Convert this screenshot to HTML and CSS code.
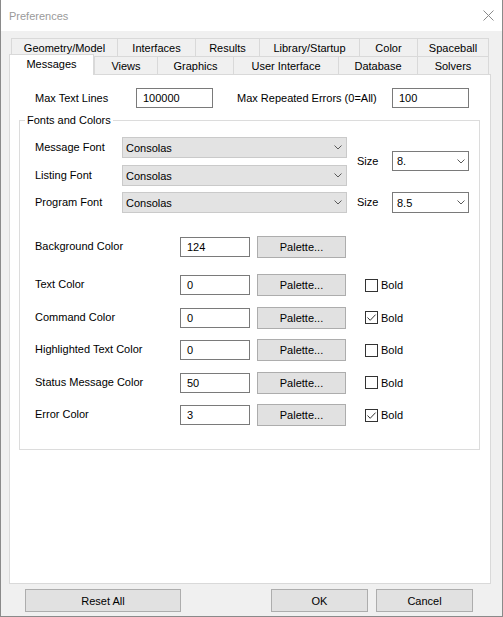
FILE: index.html
```html
<!DOCTYPE html>
<html>
<head>
<meta charset="utf-8">
<title>Preferences</title>
<link rel="stylesheet" href="styles.css">
</head>
<body>
<div class="window">
  <div class="titlebar">
    <span class="title">Preferences</span>
    <svg class="close" width="11" height="11" viewBox="0 0 11 11"><path d="M0.5 0.5 L10.5 10.5 M10.5 0.5 L0.5 10.5" stroke="#8a8a8a" stroke-width="1" fill="none"/></svg>
  </div>

  <div class="tabs">
    <div class="tabrow row1">
      <div class="tab t-geo">Geometry/Model</div>
      <div class="tab t-int">Interfaces</div>
      <div class="tab t-res">Results</div>
      <div class="tab t-lib">Library/Startup</div>
      <div class="tab t-col">Color</div>
      <div class="tab t-spa last">Spaceball</div>
    </div>
    <div class="tabrow row2">
      <div class="tab active t-msg">Messages</div>
      <div class="tab t-vie">Views</div>
      <div class="tab t-gra">Graphics</div>
      <div class="tab t-ui">User Interface</div>
      <div class="tab t-db">Database</div>
      <div class="tab t-sol last">Solvers</div>
    </div>
  </div>

  <div class="panel">
    <div class="toprow">
      <span class="lbl-maxlines">Max Text Lines</span>
      <div class="field w77">100000</div>
      <span class="lbl-maxerr">Max Repeated Errors (0=All)</span>
      <div class="field w77">100</div>
    </div>

    <div class="group">
      <div class="legend">Fonts and Colors</div>
      <div class="group-body">
        <div class="fontgrid">
          <span class="flabel">Message Font</span>
          <div class="combo fcombo">Consolas<svg class="chev" width="8" height="5" viewBox="0 0 8 5"><path d="M0.5 0.5 L4 4 L7.5 0.5" stroke="#5a5a5a" fill="none"/></svg></div>
          <span class="sizelbl size1">Size</span>
          <div class="combo scombo size1 s20">8.<svg class="chev" width="8" height="5" viewBox="0 0 8 5"><path d="M0.5 0.5 L4 4 L7.5 0.5" stroke="#5a5a5a" fill="none"/></svg></div>
          <span class="flabel">Listing Font</span>
          <div class="combo fcombo">Consolas<svg class="chev" width="8" height="5" viewBox="0 0 8 5"><path d="M0.5 0.5 L4 4 L7.5 0.5" stroke="#5a5a5a" fill="none"/></svg></div>
          <span class="flabel">Program Font</span>
          <div class="combo fcombo">Consolas<svg class="chev" width="8" height="5" viewBox="0 0 8 5"><path d="M0.5 0.5 L4 4 L7.5 0.5" stroke="#5a5a5a" fill="none"/></svg></div>
          <span class="sizelbl">Size</span>
          <div class="combo scombo">8.5<svg class="chev" width="8" height="5" viewBox="0 0 8 5"><path d="M0.5 0.5 L4 4 L7.5 0.5" stroke="#5a5a5a" fill="none"/></svg></div>
        </div>

        <div class="colors">
          <div class="crow first">
            <span class="clabel">Background Color</span>
            <div class="field cfield">124</div>
            <div class="btn palette">Palette...</div>
          </div>
          <div class="crow">
            <span class="clabel">Text Color</span>
            <div class="field cfield">0</div>
            <div class="btn palette">Palette...</div>
            <span class="cb"></span><span class="bold">Bold</span>
          </div>
          <div class="crow">
            <span class="clabel">Command Color</span>
            <div class="field cfield">0</div>
            <div class="btn palette">Palette...</div>
            <span class="cb"><svg width="11" height="11" viewBox="0 0 11 11"><path d="M1.5 5.5 L4.2 8.3 L9.6 2.6" stroke="#333" stroke-width="1" fill="none"/></svg></span><span class="bold">Bold</span>
          </div>
          <div class="crow">
            <span class="clabel">Highlighted Text Color</span>
            <div class="field cfield">0</div>
            <div class="btn palette">Palette...</div>
            <span class="cb"></span><span class="bold">Bold</span>
          </div>
          <div class="crow">
            <span class="clabel">Status Message Color</span>
            <div class="field cfield">50</div>
            <div class="btn palette">Palette...</div>
            <span class="cb"></span><span class="bold">Bold</span>
          </div>
          <div class="crow">
            <span class="clabel">Error Color</span>
            <div class="field cfield">3</div>
            <div class="btn palette">Palette...</div>
            <span class="cb"><svg width="11" height="11" viewBox="0 0 11 11"><path d="M1.5 5.5 L4.2 8.3 L9.6 2.6" stroke="#333" stroke-width="1" fill="none"/></svg></span><span class="bold">Bold</span>
          </div>
        </div>
      </div>
    </div>
  </div>

  <div class="buttons">
    <div class="btn b-reset">Reset All</div>
    <div class="btn b-ok">OK</div>
    <div class="btn b-cancel">Cancel</div>
  </div>
</div>
</body>
</html>
```

FILE: styles.css
```css
* { box-sizing: border-box; }
html, body { margin: 0; padding: 0; }
body {
  font-family: "Liberation Sans", Arial, sans-serif;
  font-size: 11px;
  color: #000;
  background: #ffffff;
}

.window {
  width: 503px;
  height: 617px;
  background: #f0f0f0;
  border: 1px solid #8a8a8a;
  border-top: none;
  display: flex;
  flex-direction: column;
}

.titlebar {
  flex: none;
  height: 31px;
  background: #fff;
  display: flex;
  align-items: center;
  justify-content: space-between;
  padding: 0 8px 0 8px;
}
.title { color: #9a9a9a; font-size: 11px; }
.close { display: block; }

/* tabs */
.tabs { flex: none; margin-top: 7px; }
.tabrow { display: flex; height: 18px; }
.row1 { padding-left: 10px; }
.row2 { padding-left: 8px; align-items: flex-end; }
.tab {
  height: 18px;
  border-top: 1px solid #d9d9d9;
  border-left: 1px solid #d9d9d9;
  background: #f0f0f0;
  display: flex;
  align-items: center;
  justify-content: center;
  white-space: nowrap;
}
.tab.last { border-right: 1px solid #d9d9d9; }
.tab.active {
  height: 21px;
  margin-bottom: -1px;
  padding-bottom: 2px;
  background: #fff;
  border-right: 1px solid #d9d9d9;
  position: relative;
  z-index: 1;
}
.t-geo { width: 106px; }
.t-int { width: 78px; }
.t-res { width: 64px; }
.t-lib { width: 100px; }
.t-col { width: 58px; }
.t-spa { width: 72px; }
.t-msg { width: 85px; }
.t-vie { width: 63px; }
.t-gra { width: 76px; }
.t-ui  { width: 105px; }
.t-db  { width: 79px; }
.t-sol { width: 72px; }

/* panel */
.panel {
  flex: none;
  margin-left: 8px;
  width: 482px;
  height: 510px;
  background: #fff;
  border: 1px solid #d9d9d9;
}

.toprow {
  display: flex;
  align-items: center;
  margin-top: 13px;
  padding-left: 25px;
}
.lbl-maxlines { width: 101px; }
.lbl-maxerr { width: 155px; margin-left: 24px; }

.field {
  height: 20px;
  border: 1px solid #7a7a7a;
  background: #fff;
  padding-left: 6px;
  display: flex;
  align-items: center;
}
.w77 { width: 77px; }

/* group box */
.group {
  margin: 12px 0 0 9px;
  width: 461px;
  border: 1px solid #dcdcdc;
  padding-bottom: 23px;
}
.legend {
  width: fit-content;
  margin: -9px 0 0 5px;
  padding: 0 2px;
  line-height: 16px;
  height: 16px;
  background: #fff;
}
.group-body { padding-left: 15px; }

.fontgrid {
  margin-top: 9px;
  display: grid;
  grid-template-columns: 87px 225px 45px 77px;
  grid-template-rows: 28px 27px 21px;
}
.flabel { align-self: start; line-height: 21px; }
.combo {
  align-self: start;
  height: 21px;
  display: flex;
  align-items: center;
  justify-content: space-between;
}
.fcombo {
  background: #e3e3e3;
  border: 1px solid #cacaca;
  padding: 0 4px 0 3px;
}
.scombo {
  background: #fff;
  border: 1px solid #7a7a7a;
  padding: 0 3px 0 4px;
}
.sizelbl {
  align-self: start;
  line-height: 21px;
  padding-left: 10px;
}
.size1 { grid-row: span 2; margin-top: 14px; }
.s20 { height: 20px; }
.chev { display: block; flex: none; }

/* colors */
.colors {
  margin-top: 23px;
  display: flex;
  flex-direction: column;
  gap: 10.5px;
}
.crow {
  display: flex;
  align-items: center;
  height: 22px;
}
.crow.first { margin-bottom: 5.5px; }
.clabel { width: 145px; padding-bottom: 2px; }
.cfield { width: 70px; }

.btn {
  background: #e1e1e1;
  border: 1px solid #adadad;
  display: flex;
  align-items: center;
  justify-content: center;
}
.palette { width: 89px; height: 22px; margin-left: 7px; }

.cb {
  width: 13px;
  height: 13px;
  margin-left: 19px;
  border: 1px solid #333;
  background: #fff;
  display: flex;
}
.cb svg { display: block; }
.bold { margin-left: 3px; }

/* bottom buttons */
.buttons {
  flex: none;
  display: flex;
  margin-top: 5px;
  padding: 0 29px 0 24px;
}
.buttons .btn { height: 23px; }
.b-reset { width: 156px; }
.b-ok { width: 97px; margin-left: auto; }
.b-cancel { width: 97px; margin-left: 8px; }
```
